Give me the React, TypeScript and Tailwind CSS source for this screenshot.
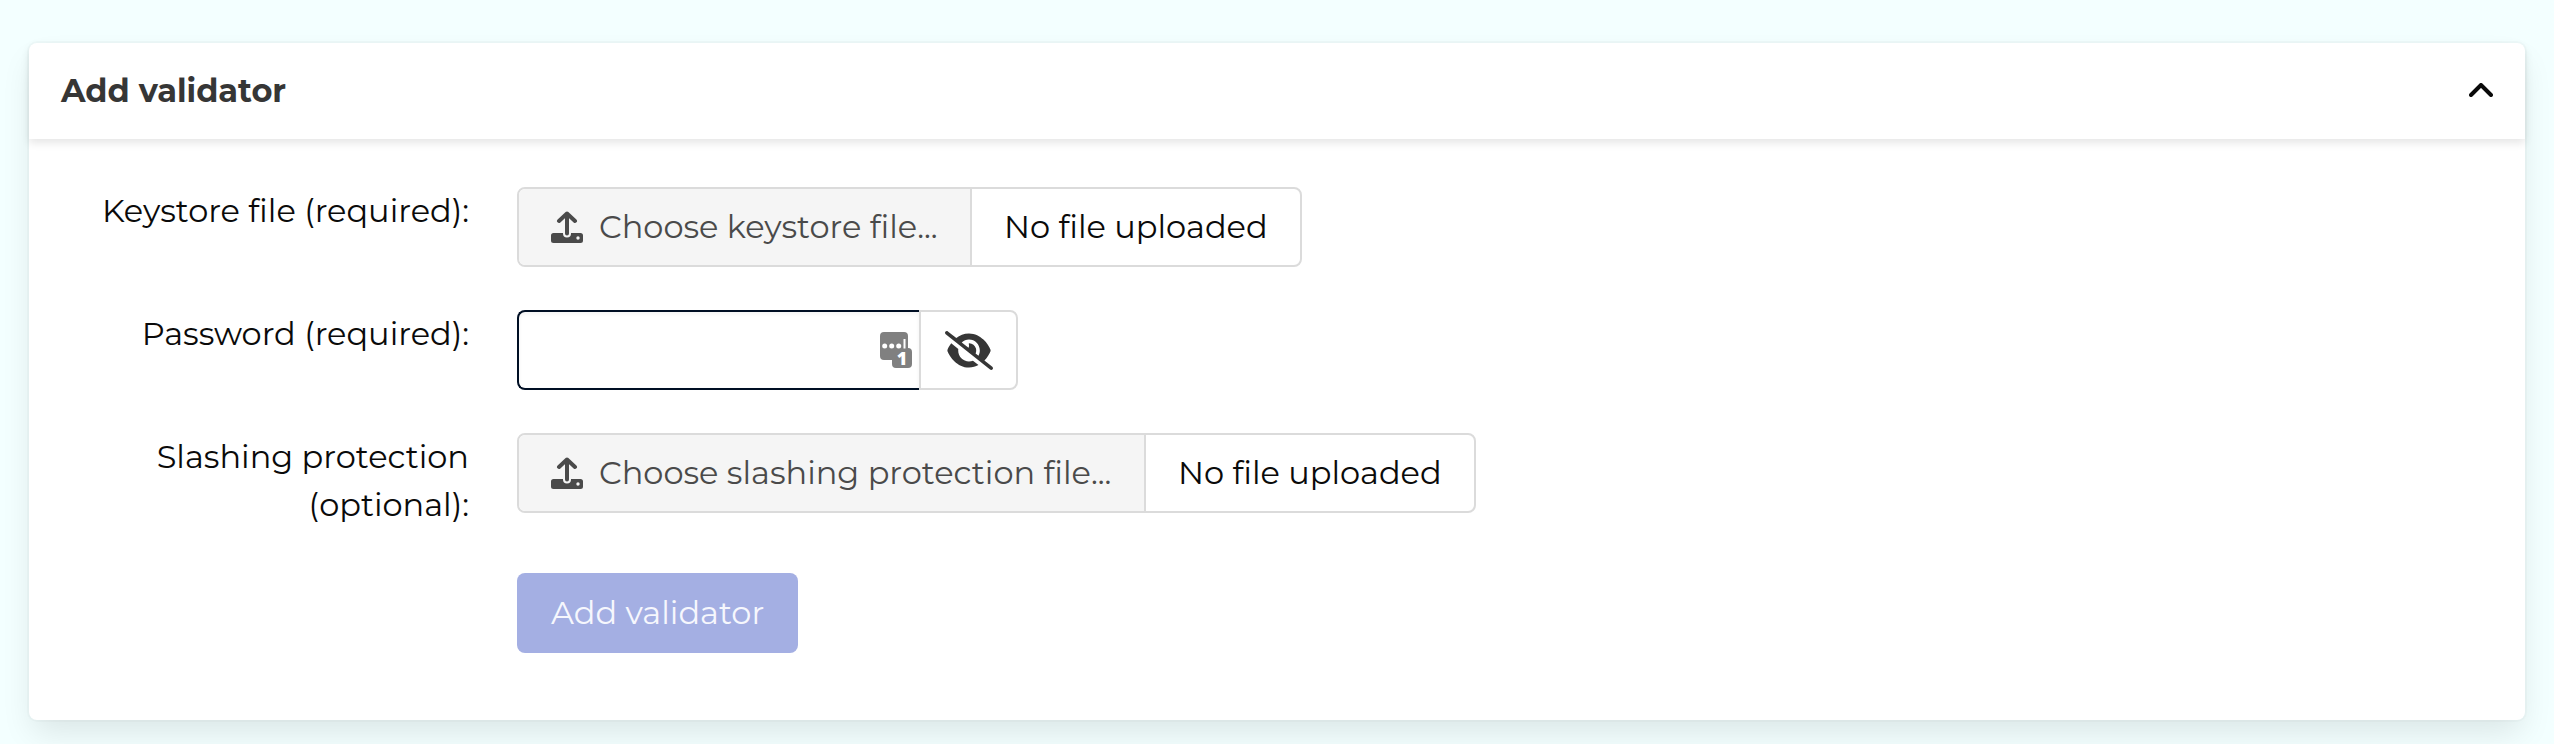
import type { ReactNode } from "react";

function ChevronUp() {
  return (
    <svg className="h-[14px] w-6" viewBox="0 0 24 14" fill="none" stroke="#0a0a0a" strokeWidth="4" strokeLinecap="round" strokeLinejoin="round">
      <path d="M2 12 12 2l10 10" />
    </svg>
  );
}

function UploadIcon() {
  return (
    <svg className="size-8 shrink-0" viewBox="0 0 32 32">
      <path fill="#4a4a4a" fillRule="evenodd" d="M2.500 22H12v.5a4 4 0 0 0 8 0V22h9.500a2.500 2.500 0 0 1 2.500 2.500v5a2.500 2.500 0 0 1-2.500 2.500h-27A2.500 2.500 0 0 1 0 29.500v-5A2.500 2.500 0 0 1 2.500 22ZM27 25.300a1.700 1.700 0 1 0 0 3.400 1.700 1.700 0 0 0 0-3.400Z" />
      <path fill="none" stroke="#4a4a4a" strokeWidth="4" strokeLinecap="round" strokeLinejoin="round" d="M16 22.500V2.500M8 10l8-7.500 8 7.500" />
    </svg>
  );
}

function EyeSlash() {
  return (
    <svg className="h-[39px] w-12" viewBox="0 0 640 512" preserveAspectRatio="none" fill="#363636">
      <path d="M38.800 5.100C28.400-3.100 13.300-1.200 5.100 9.200S-1.200 34.700 9.200 42.900l592 464c10.400 8.200 25.500 6.300 33.700-4.100s6.300-25.500-4.100-33.700L525.600 386.700c39.600-40.600 66.400-86.100 79.900-118.400c3.300-7.900 3.300-16.700 0-24.600c-14.900-35.700-46.200-87.700-93-131.100C465.500 68.800 400.800 32 320 32c-68.200 0-125 26.300-169.300 60.800L38.800 5.100zM223.100 149.500C248.600 126.200 282.700 112 320 112c79.500 0 144 64.500 144 144c0 24.900-6.300 48.300-17.400 68.700L408 294.500c8.400-19.300 10.600-41.400 4.800-63.300c-11.100-41.500-47.800-69.400-88.600-71.100c-5.800-.2-9.200 6.100-7.400 11.700c2.100 6.400 3.300 13.200 3.300 20.300c0 10.200-2.400 19.800-6.600 28.300l-90.300-70.800zM373 389.900c-16.400 6.500-34.300 10.100-53 10.100c-79.500 0-144-64.500-144-144c0-6.900.5-13.600 1.400-20.200L83.100 161.500C60.300 191.200 44 220.800 34.500 243.700c-3.300 7.900-3.300 16.700 0 24.600c14.900 35.700 46.200 87.700 93 131.100C174.500 443.200 239.200 480 320 480c47.800 0 89.900-12.900 126.200-32.500L373 389.900z" />
    </svg>
  );
}

function PasswordManagerIcon() {
  return (
    <svg className="h-9 w-8" viewBox="0 0 32 36">
      <path fill="#808080" d="M4 0h20a4 4 0 0 1 4 4v12a4 4 0 0 1 4 4v12a4 4 0 0 1-4 4H16a4 4 0 0 1-4-4v-4H4a4 4 0 0 1-4-4V4a4 4 0 0 1 4-4Z" />
      <g fill="#fff">
        <circle cx="4.700" cy="14" r="2.500" />
        <circle cx="11.700" cy="14" r="2.500" />
        <circle cx="18.700" cy="14" r="2.500" />
        <rect x="23.500" y="7" width="2" height="9.500" />
        <text x="22" y="33" fontSize="18" fontWeight="800" fontFamily="Open Sans, sans-serif" textAnchor="middle">1</text>
      </g>
    </svg>
  );
}

function Field({ label, className, children }: { label?: ReactNode; className: string; children: ReactNode }) {
  return (
    <div className={`flex items-start ${className}`}>
      <div className="mr-12 w-[392px] shrink-0 text-right">{label}</div>
      {children}
    </div>
  );
}

function FileInput({ prompt, className }: { prompt: string; className: string }) {
  return (
    <div className="flex h-20 rounded-lg border-2 border-[#dbdbdb] whitespace-nowrap">
      <div className={`flex items-center gap-4 rounded-l-md border-r-2 border-[#dbdbdb] bg-[#f5f5f5] pl-8 text-[#4a4a4a] ${className}`}>
        <UploadIcon />
        <span>{prompt}</span>
      </div>
      <div className="flex w-[328px] items-center pl-8">
        <span>No file uploaded</span>
      </div>
    </div>
  );
}

export default function App() {
  return (
    <div className="h-[744px] overflow-hidden bg-[#f3ffff] px-[29px] pt-[43px] font-['Montserrat','Inter',sans-serif] text-[32px] leading-[48px] font-normal text-[#0a0a0a]">
      <section className="h-[677px] rounded-lg bg-white shadow-[0_16px_32px_-4px_rgba(10,10,10,0.1),0_0_0_2px_rgba(10,10,10,0.02)]">
        <header className="flex h-24 items-center justify-between rounded-t-lg pr-8 pl-8 shadow-[0_4px_8px_rgba(10,10,10,0.1)]">
          <h2 className="font-bold text-[#363636]">Add validator</h2>
          <button className="flex h-12 w-6 items-center justify-center pb-0.5"><ChevronUp /></button>
        </header>
        <div className="px-12 pt-12">
          <Field className="mb-[43px] h-20" label="Keystore file (required):">
            <FileInput className="w-[453px]" prompt="Choose keystore file..." />
          </Field>
          <Field className="mb-[43px] h-20" label="Password (required):">
            <div className="flex h-20">
              <div className="flex w-[402px] items-center justify-end rounded-l-lg border-2 border-r-0 border-[#000f24] pr-[7px] shadow-[inset_0_2px_4px_rgba(10,10,10,0.05)]">
                <PasswordManagerIcon />
              </div>
              <button className="flex w-[99px] items-center justify-center rounded-r-lg border-2 border-[#dbdbdb]">
                <EyeSlash />
              </button>
            </div>
          </Field>
          <Field className="mb-11 h-24" label={<>Slashing protection<br />(optional):</>}>
            <FileInput className="w-[627px]" prompt="Choose slashing protection file..." />
          </Field>
          <Field className="h-20">
            <button className="flex h-20 w-[281px] items-center rounded-lg bg-[#a4afe3] pl-[34px] text-[#f6f7fd]">
              Add validator
            </button>
          </Field>
        </div>
      </section>
    </div>
  );
}
